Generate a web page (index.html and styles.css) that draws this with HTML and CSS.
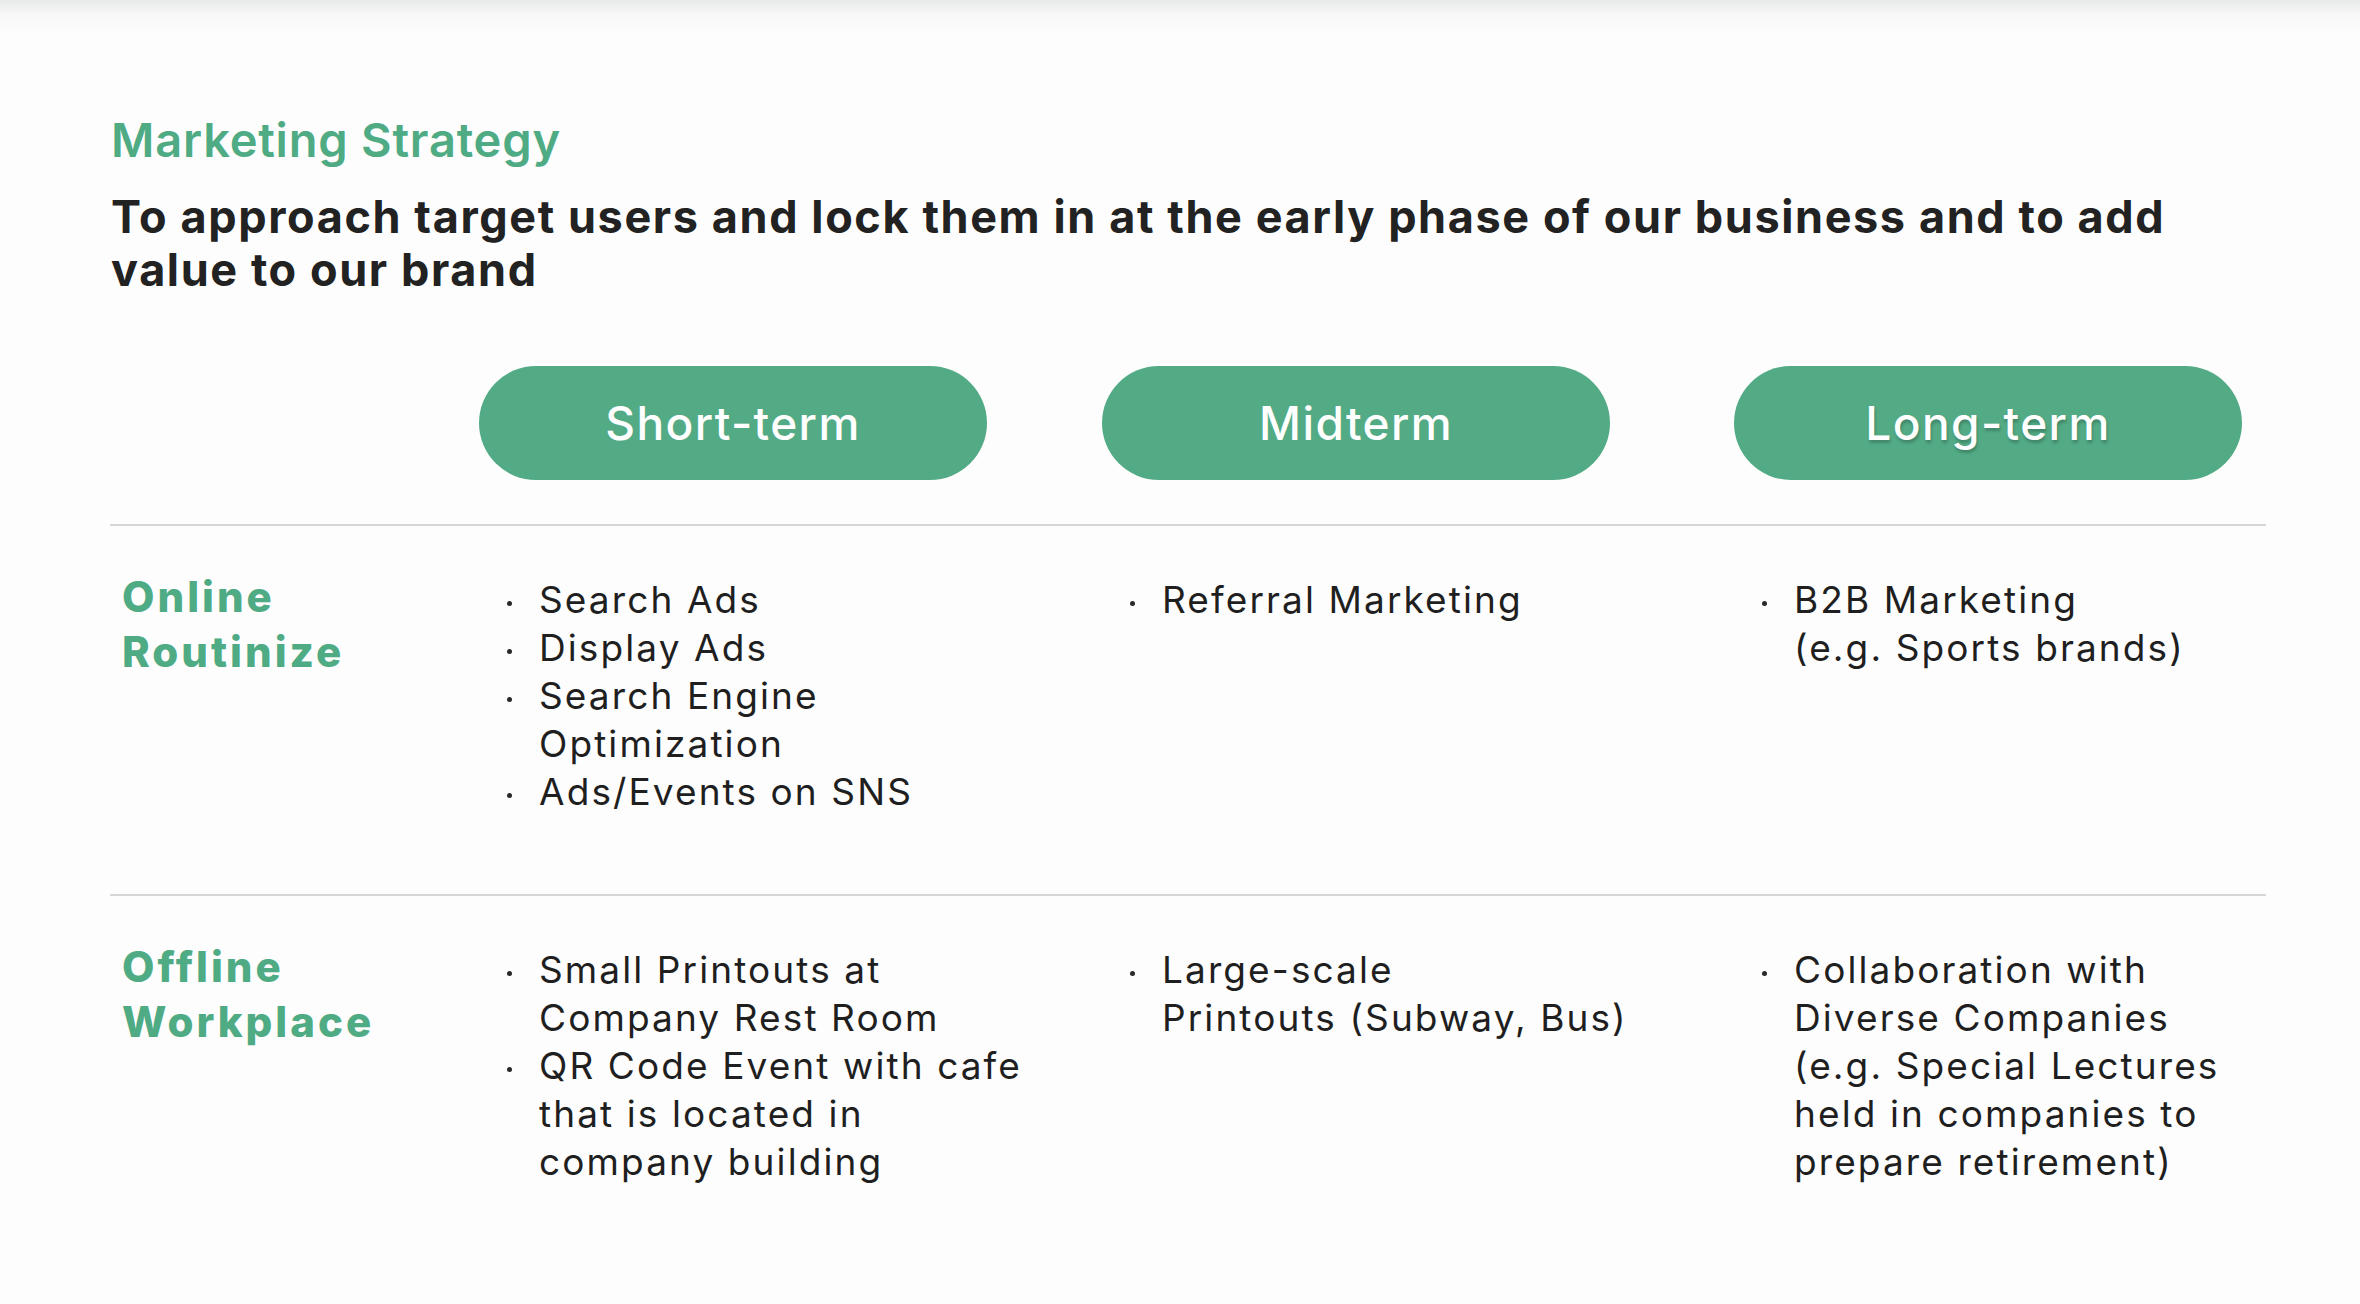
FILE: index.html
```html
<!DOCTYPE html>
<html lang="en">
<head>
<meta charset="utf-8">
<title>Marketing Strategy</title>
<link rel="stylesheet" href="styles.css">
</head>
<body>
<main class="slide">
  <header class="intro">
    <h2 class="eyebrow">Marketing Strategy</h2>
    <h1 class="headline">To approach target users and lock them in at the early phase of our business and to add value to our brand</h1>
  </header>

  <div class="terms">
    <div class="spacer"></div>
    <div class="pill">Short-term</div>
    <div class="pill">Midterm</div>
    <div class="pill pill-shadow">Long-term</div>
  </div>

  <section class="row">
    <h3 class="label">Online<br>Routinize</h3>
    <ul class="items">
      <li>Search Ads</li>
      <li>Display Ads</li>
      <li>Search Engine<br>Optimization</li>
      <li>Ads/Events on SNS</li>
    </ul>
    <ul class="items">
      <li>Referral Marketing</li>
    </ul>
    <ul class="items">
      <li>B2B Marketing<br>(e.g. Sports brands)</li>
    </ul>
  </section>

  <section class="row">
    <h3 class="label">Offline<br>Workplace</h3>
    <ul class="items">
      <li>Small Printouts at<br>Company Rest Room</li>
      <li>QR Code Event with cafe<br>that is located in<br>company building</li>
    </ul>
    <ul class="items">
      <li>Large-scale<br>Printouts (Subway, Bus)</li>
    </ul>
    <ul class="items">
      <li>Collaboration with<br>Diverse Companies<br>(e.g. Special Lectures<br>held in companies to<br>prepare retirement)</li>
    </ul>
  </section>
</main>
</body>
</html>
```

FILE: styles.css
```css
html, body {
  margin: 0;
  padding: 0;
}

body {
  width: 2360px;
  height: 1304px;
  overflow: hidden;
  background: #fdfdfd linear-gradient(to bottom, #e8eae9 0px, #f6f7f6 14px, #fdfdfd 34px) no-repeat;
  font-family: Inter, "Open Sans", "Liberation Sans", sans-serif;
  color: #232323;
}

.slide {
  padding: 112px 94px 0 110px;
}

.intro {
  padding-left: 1px;
}

.eyebrow {
  margin: 0;
  font-size: 47px;
  line-height: 56px;
  font-weight: 600;
  color: #4fab84;
  letter-spacing: 0.8px;
}

.headline {
  margin: 22px 0 0;
  width: 2100px;
  font-size: 45px;
  line-height: 53px;
  font-weight: 700;
  color: #222222;
  letter-spacing: 1.6px;
}

.terms {
  display: grid;
  grid-template-columns: 369px 623px 632px 532px;
  width: 2156px;
  margin-top: 70px;
  padding-bottom: 44px;
  border-bottom: 2px solid #d6d6d6;
}

.pill {
  height: 114px;
  width: 508px;
  border-radius: 57px;
  background: #52ab85;
  color: #ffffff;
  font-size: 46px;
  font-weight: 500;
  letter-spacing: 1.4px;
  display: flex;
  align-items: center;
  justify-content: center;
}

.pill-shadow {
  text-shadow: 1px 3px 3px rgba(0, 0, 0, 0.22);
}

.row {
  display: grid;
  grid-template-columns: 369px 623px 632px 532px;
  width: 2156px;
  padding: 50px 0 78px;
  border-bottom: 2px solid #d6d6d6;
}

.row:last-child {
  border-bottom: none;
}

.label {
  margin: -7px 0 0 12px;
  font-size: 42px;
  line-height: 55px;
  font-weight: 800;
  color: #4fab84;
  letter-spacing: 3px;
}

.items {
  list-style: none;
  margin: 0;
  padding: 0 0 0 60px;
  font-size: 37px;
  line-height: 48px;
  font-weight: 400;
  color: #1f1f1f;
  letter-spacing: 2.1px;
}

.items li {
  position: relative;
}

.items li::before {
  content: "";
  position: absolute;
  left: -32px;
  top: 25px;
  width: 5px;
  height: 5px;
  border-radius: 50%;
  background: #2a2a2a;
}
```
